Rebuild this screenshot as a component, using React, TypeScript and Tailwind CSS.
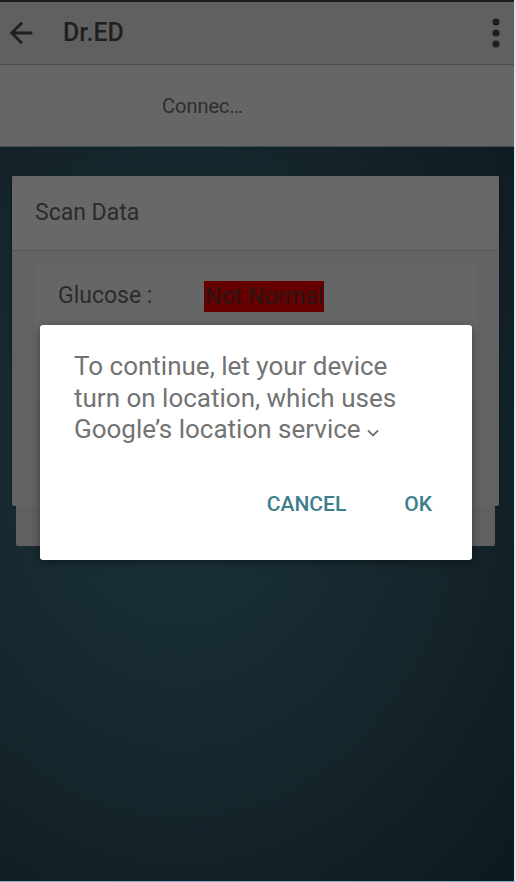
import React from "react";

function BackArrow() {
  return (
    <svg width="34" height="34" viewBox="0 0 24 24" className="shrink-0">
      <path
        d="M20 11H7.83l5.59-5.59L12 4l-8 8 8 8 1.41-1.41L7.83 13H20v-2z"
        fill="#1f1f1f"
      />
    </svg>
  );
}

function MoreVert() {
  return (
    <svg width="16" height="44" viewBox="0 0 16 44" className="shrink-0">
      <circle cx="8" cy="11" r="3.6" fill="#1f1f1f" />
      <circle cx="8" cy="22" r="3.6" fill="#1f1f1f" />
      <circle cx="8" cy="33" r="3.6" fill="#1f1f1f" />
    </svg>
  );
}

function LocationDialog() {
  return (
    <div className="absolute left-[40px] top-[325px] w-[432px] h-[235px] bg-white rounded-[3px] shadow-[0_2px_8px_rgba(0,0,0,0.4)] flex flex-col">
      <div className="pl-[34px] pt-[26px] text-[26px] leading-[31.5px] text-[#737373] whitespace-nowrap">
        <div>To continue, let your device</div>
        <div>turn on location, which uses</div>
        <div className="flex items-center">
          <span>Google’s location service</span>
          <svg width="14" height="10" viewBox="0 0 14 10" className="ml-[5px] mt-[6px]">
            <path d="M2 2.5 L7 7.5 L12 2.5" stroke="#737373" strokeWidth="1.8" fill="none" />
          </svg>
        </div>
      </div>
      <div className="flex justify-end items-center gap-[58px] pr-[40px] mt-[43px] text-[21px] font-medium text-[#3c7f8b]">
        <span>CANCEL</span>
        <span>OK</span>
      </div>
    </div>
  );
}

export default function App() {
  return (
    <div
      className="relative w-[516px] h-[882px] overflow-hidden flex flex-col border-r-2 border-r-[#dce2e6] border-b border-b-[#79aacb]"
      style={{ fontFamily: "Roboto, 'Noto Sans', sans-serif" }}
    >
      <div className="h-[2px] bg-[#1c1c1c]" />

      {/* Toolbar */}
      <div className="h-[62px] bg-[#606060] flex items-center pl-[4px] pr-[10px]">
        <BackArrow />
        <span className="ml-[25px] text-[25px] font-medium text-[#1f1f1f]">Dr.ED</span>
        <div className="flex-1" />
        <MoreVert />
      </div>
      <div className="h-px bg-[#4d4d4d]" />

      {/* Status bar */}
      <div className="h-[81px] bg-[#666666] flex items-center pl-[162px] text-[20px] text-[#2e2e2e]">
        Connec…
      </div>
      <div className="h-px bg-[#3e4b50]" />

      {/* Content */}
      <div className="flex-1 pl-[12px] pr-[15px] pt-[29px] bg-[radial-gradient(ellipse_at_35%_45%,#1b323b_0%,#15262c_55%,#0e191e_100%)]">
        <div className="rounded-[2px] bg-[#636363] shadow-[0_1px_3px_rgba(0,0,0,0.5)] h-[330px] flex flex-col">
          <div className="h-[74px] bg-[#686868] flex items-center pl-[23px] text-[23px] text-[#2b2b2b] rounded-t-[2px]">
            Scan Data
          </div>
          <div className="h-px bg-[#575757]" />
          <div className="ml-[23px] mr-[22px] mt-[12px] h-[75px] pb-[8px] bg-[#666666] flex items-center pl-[23px] text-[23px] text-[#2b2b2b] rounded-[2px]">
            <span className="w-[146px]">Glucose :</span>
            <span className="bg-[#660000] text-[#2a1414] h-[31px] leading-[31px] px-[1px]">Not Normal</span>
          </div>
          <div className="ml-[23px] mr-[22px] mt-[2px] h-[60px] bg-[#646464]" />
        </div>
        <div className="mx-[4px] h-[40px] bg-[#606060] rounded-b-[2px]" />
      </div>

      <LocationDialog />
    </div>
  );
}
